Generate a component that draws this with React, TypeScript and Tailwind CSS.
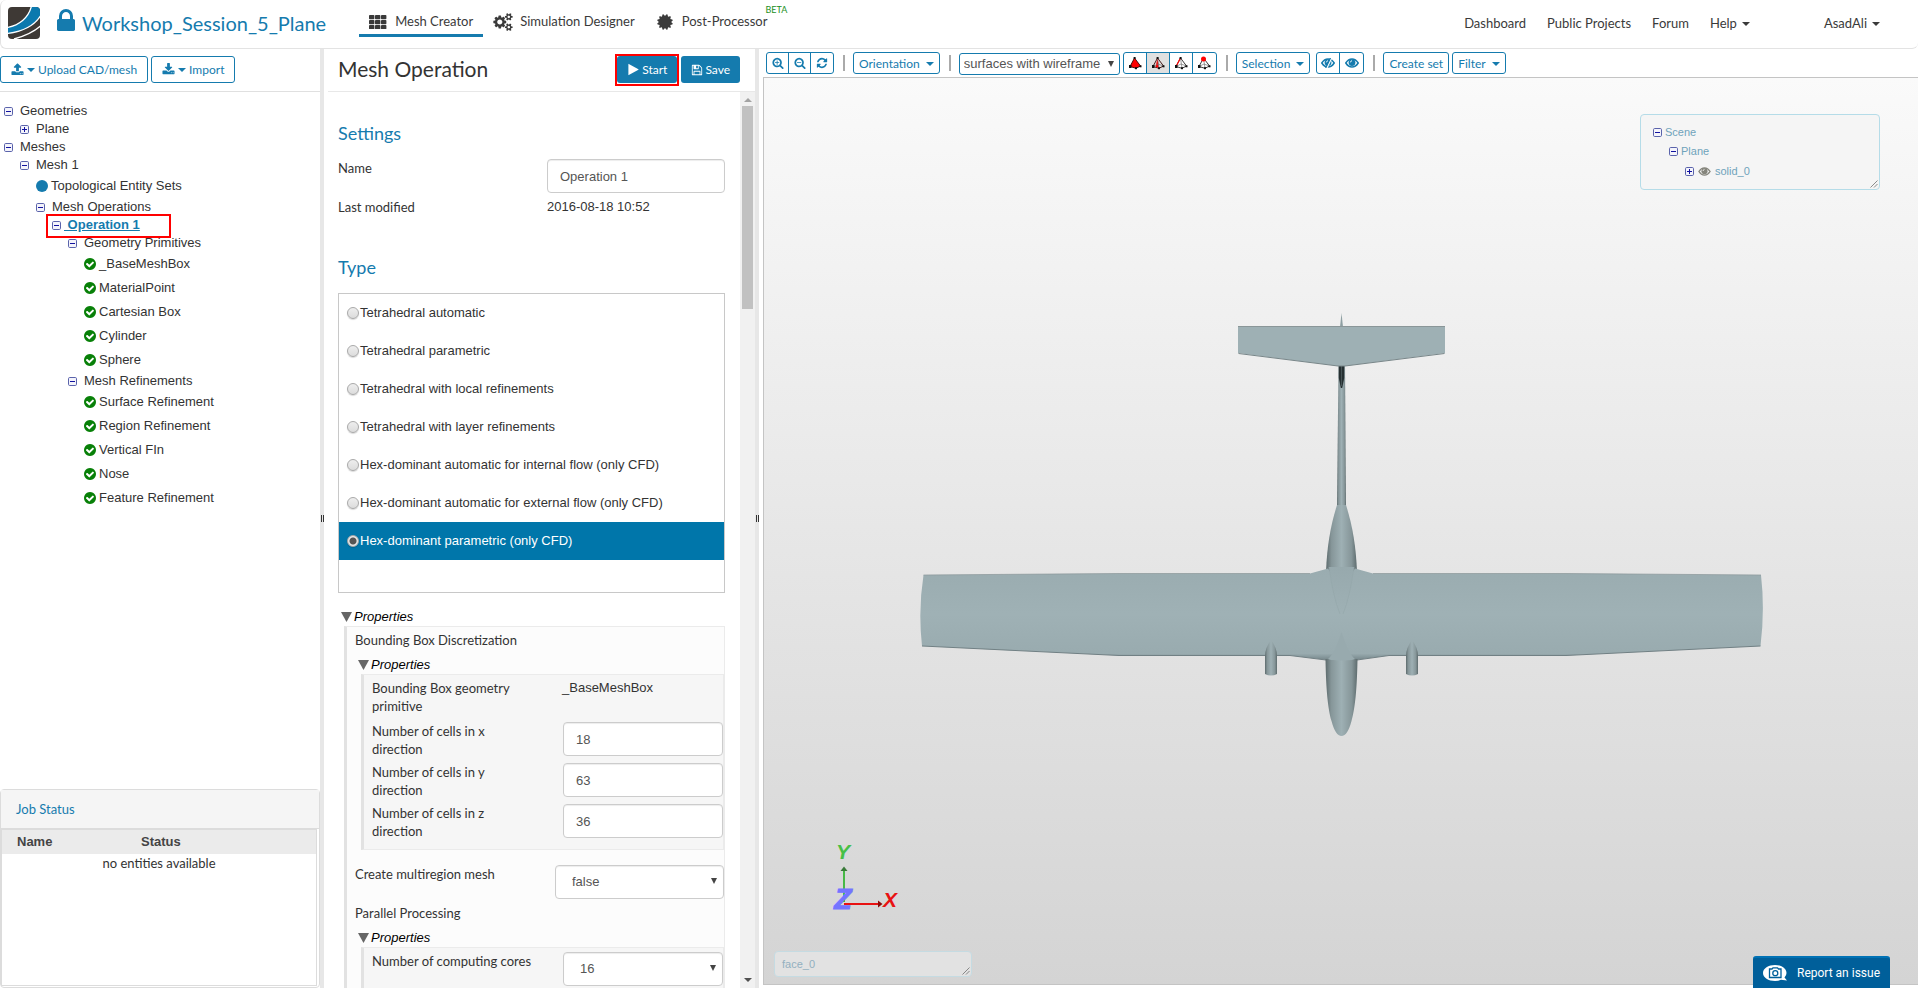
import { useState } from "react";
import type { ReactNode } from "react";

const icons = {
  lock: "M640 768h512v-192q0-106-75-181t-181-75-181 75-75 181v192zm832 96v576q0 40-28 68t-68 28h-960q-40 0-68-28t-28-68v-576q0-40 28-68t68-28h32v-192q0-184 132-316t316-132 316 132 132 316v192h32q40 0 68 28t28 68z",
  certificate:
    "M1504 896l138 135q30 28 20 70-12 41-52 51l-188 48 53 186q12 41-19 70-29 31-70 19l-186-53-48 188q-10 40-51 52-12 2-19 2-31 0-51-22l-135-138-135 138q-28 30-70 20-41-11-51-52l-48-188-186 53q-41 12-70-19-31-29-19-70l53-186-188-48q-40-10-52-51-10-42 20-70l138-135-138-135q-30-28-20-70 12-41 52-51l188-48-53-186q-12-41 19-70 29-31 70-19l186 53 48-188q10-41 51-51 41-12 70 19l135 139 135-139q29-30 70-19 41 10 51 51l48 188 186-53q41-12 70 19 31 29 19 70l-53 186 188 48q40 10 52 51 10 42-20 70z",
  cogs: "M832 896q0-106-75-181t-181-75-181 75-75 181 75 181 181 75 181-75 75-181zm768 512q0-52-38-90t-90-38-90 38-38 90q0 53 37.5 90.5t90.5 37.5 90.5-37.5 37.5-90.5zm0-1024q0-52-38-90t-90-38-90 38-38 90q0 53 37.5 90.5t90.5 37.5 90.5-37.5 37.5-90.5zm-384 421v185q0 10-7 19.5t-16 10.5l-155 24q-11 35-32 76 34 48 90 115 7 11 7 20 0 12-7 19-23 30-82.5 89.5t-78.5 59.5q-11 0-21-7l-115-90q-37 19-77 31-11 108-23 155-7 24-30 24h-186q-11 0-20-7.5t-10-17.5l-23-153q-34-10-75-31l-118 89q-7 7-20 7-11 0-21-8-144-133-144-160 0-9 7-19 10-14 41-53t47-61q-23-44-35-82l-152-24q-10-1-17-9.5t-7-19.5v-185q0-10 7-19.5t16-10.5l155-24q11-35 32-76-34-48-90-115-7-11-7-20 0-12 7-20 22-30 82-89t79-59q11 0 21 7l115 90q34-18 77-32 11-108 23-154 7-24 30-24h186q11 0 20 7.5t10 17.5l23 153q34 10 75 31l118-89q8-7 20-7 11 0 21 8 144 133 144 160 0 8-7 19-12 16-42 54t-45 60q23 48 34 82l152 23q10 2 17 10.5t7 19.5zm640 533v140q0 16-149 31-12 27-30 52 51 113 51 138 0 4-4 7-122 71-124 71-8 0-46-47t-52-68q-20 2-30 2t-30-2q-14 21-52 68t-46 47q-2 0-124-71-4-3-4-7 0-25 51-138-18-25-30-52-149-15-149-31v-140q0-16 149-31 13-29 30-52-51-113-51-138 0-4 4-7 4-2 35-20t59-34 30-16q8 0 46 46.5t52 67.5q20-2 30-2t30 2q51-71 92-112l6-2q4 0 124 70 4 3 4 7 0 25-51 138 17 23 30 52 149 15 149 31zm0-1024v140q0 16-149 31-12 27-30 52 51 113 51 138 0 4-4 7-122 71-124 71-8 0-46-47t-52-68q-20 2-30 2t-30-2q-14 21-52 68t-46 47q-2 0-124-71-4-3-4-7 0-25 51-138-18-25-30-52-149-15-149-31v-140q0-16 149-31 13-29 30-52-51-113-51-138 0-4 4-7 4-2 35-20t59-34 30-16q8 0 46 46.5t52 67.5q20-2 30-2t30 2q51-71 92-112l6-2q4 0 124 70 4 3 4 7 0 25-51 138 17 23 30 52 149 15 149 31z",
  check:
    "M1412 734q0-28-18-46l-91-90q-19-19-45-19t-45 19l-408 407-226-226q-19-19-45-19t-45 19l-91 90q-18 18-18 46 0 27 18 45l362 362q19 19 45 19 27 0 46-19l543-543q18-18 18-45zm252 162q0 209-103 385.5t-279.5 279.5-385.5 103-385.5-103-279.5-279.5-103-385.5 103-385.5 279.5-279.5 385.5-103 385.5 103 279.5 279.5 103 385.5z",
  play: "M1576 927l-1328 738q-23 13-39.5 3t-16.5-36v-1472q0-26 16.5-36t39.5 3l1328 738q23 13 23 31t-23 31z",
  save: "M512 1536h768v-384h-768v384zm896 0h128v-896q0-14-10-38.5t-20-34.5l-281-281q-10-10-34-20t-39-10v416q0 40-28 68t-68 28h-576q-40 0-68-28t-28-68v-416h-128v1280h128v-416q0-40 28-68t68-28h832q40 0 68 28t28 68v416zm-384-928v-320q0-13-9.5-22.5t-22.5-9.5h-192q-13 0-22.5 9.5t-9.5 22.5v320q0 13 9.5 22.5t22.5 9.5h192q13 0 22.5-9.5t9.5-22.5zm640 32v928q0 40-28 68t-68 28h-1344q-40 0-68-28t-28-68v-1344q0-40 28-68t68-28h928q40 0 88 20t76 48l280 280q28 28 48 76t20 88z",
  zoomIn:
    "M1088 800v64q0 13-9.5 22.5t-22.5 9.5h-224v224q0 13-9.5 22.5t-22.5 9.5h-64q-13 0-22.5-9.5t-9.5-22.5v-224h-224q-13 0-22.5-9.5t-9.5-22.5v-64q0-13 9.5-22.5t22.5-9.5h224v-224q0-13 9.5-22.5t22.5-9.5h64q13 0 22.5 9.5t9.5 22.5v224h224q13 0 22.5 9.5t9.5 22.5zm128 32q0-185-131.5-316.5t-316.5-131.5-316.5 131.5-131.5 316.5 131.5 316.5 316.5 131.5 316.5-131.5 131.5-316.5zm512 832q0 53-37.5 90.5t-90.5 37.5q-54 0-90-38l-343-342q-179 124-399 124-143 0-273.5-55.5t-225-150-150-225-55.5-273.5 55.5-273.5 150-225 225-150 273.5-55.5 273.5 55.5 225 150 150 225 55.5 273.5q0 220-124 399l343 343q37 37 37 90z",
  zoomOut:
    "M1088 800v64q0 13-9.5 22.5t-22.5 9.5h-576q-13 0-22.5-9.5t-9.5-22.5v-64q0-13 9.5-22.5t22.5-9.5h576q13 0 22.5 9.5t9.5 22.5zm128 32q0-185-131.5-316.5t-316.5-131.5-316.5 131.5-131.5 316.5 131.5 316.5 316.5 131.5 316.5-131.5 131.5-316.5zm512 832q0 53-37.5 90.5t-90.5 37.5q-54 0-90-38l-343-342q-179 124-399 124-143 0-273.5-55.5t-225-150-150-225-55.5-273.5 55.5-273.5 150-225 225-150 273.5-55.5 273.5 55.5 225 150 150 225 55.5 273.5q0 220-124 399l343 343q37 37 37 90z",
  refresh:
    "M1639 1056q0 5-1 7-64 268-268 434.5t-478 166.5q-146 0-282.5-55t-243.5-157l-129 129q-19 19-45 19t-45-19-19-45v-448q0-26 19-45t45-19h448q26 0 45 19t19 45-19 45l-137 137q71 66 161 102t187 36q134 0 250-65t186-179q11-17 53-117 8-23 30-23h192q13 0 22.5 9.5t9.5 22.5zm25-800v448q0 26-19 45t-45 19h-448q-26 0-45-19t-19-45 19-45l138-138q-148-137-349-137-134 0-250 65t-186 179q-11 17-53 117-8 23-30 23h-199q-13 0-22.5-9.5t-9.5-22.5v-7q65-268 270-434.5t480-166.5q146 0 284 55.5t245 156.5l130-129q19-19 45-19t45 19 19 45z",
  upload:
    "M1344 1472q0-26-19-45t-45-19-45 19-19 45 19 45 45 19 45-19 19-45zm256 0q0-26-19-45t-45-19-45 19-19 45 19 45 45 19 45-19 19-45zm128-224v320q0 40-28 68t-68 28h-1472q-40 0-68-28t-28-68v-320q0-40 28-68t68-28h427q21 56 70.5 92t110.5 36h256q61 0 110.5-36t70.5-92h427q40 0 68 28t28 68zm-325-648q-17 40-59 40h-256v448q0 26-19 45t-45 19h-256q-26 0-45-19t-19-45v-448h-256q-42 0-59-40-17-39 14-69l448-448q18-19 45-19t45 19l448 448q31 30 14 69z",
  download:
    "M1344 1344q0-26-19-45t-45-19-45 19-19 45 19 45 45 19 45-19 19-45zm256 0q0-26-19-45t-45-19-45 19-19 45 19 45 45 19 45-19 19-45zm128-224v320q0 40-28 68t-68 28h-1472q-40 0-68-28t-28-68v-320q0-40 28-68t68-28h465l135 136q58 56 136 56t136-56l136-136h464q40 0 68 28t28 68zm-325-569q17 41-14 70l-448 448q-18 19-45 19t-45-19l-448-448q-31-29-14-70 17-39 59-39h256v-448q0-26 19-45t45-19h256q26 0 45 19t19 45v448h256q42 0 59 39z",
};

function Icon({ name, className }: { name: keyof typeof icons; className: string }) {
  return (
    <svg viewBox="0 0 1792 1792" fill="currentColor" className={`shrink-0 overflow-visible ${className}`} aria-hidden="true">
      <path d={icons[name]} />
    </svg>
  );
}

function GridIcon() {
  return (
    <svg viewBox="0 0 18 14" className="h-[14px] w-[18px]" fill="currentColor" aria-hidden="true">
      {[0, 5, 10].map((y) =>
        [0, 6, 12].map((x) => <rect key={`${x}-${y}`} x={x} y={y} width="5.4" height="4.2" rx="0.8" />),
      )}
    </svg>
  );
}

function Caret() {
  return (
    <svg viewBox="0 0 8 4" className="h-1 w-2 shrink-0" fill="currentColor" aria-hidden="true">
      <path d="M0 0h8L4 4z" />
    </svg>
  );
}

function Logo() {
  return (
    <svg viewBox="0 0 32 32" className="h-8 w-8 shrink-0" aria-hidden="true">
      <clipPath id="logo-clip">
        <rect width="32" height="32" rx="4" />
      </clipPath>
      <g clipPath="url(#logo-clip)">
        <rect width="32" height="32" fill="#3e3935" />
        <path d="M-1 20.500C11 18.500 20.500 11 23 -1H33V8C27 18 15 25.500 -1 27z" fill="#0b79ae" />
        <path d="M-1 20.500C11 18.500 20.500 11 23.500 -1" fill="none" stroke="#fff" strokeWidth="1.300" />
        <path d="M-1 26.500C15 24.500 27 18 33 8" fill="none" stroke="#fff" strokeWidth="1.300" />
        <path d="M6 32C15 29.500 25 26 33 18.500" fill="none" stroke="#fff" strokeWidth="1.300" />
      </g>
    </svg>
  );
}

function EyeIcon({ slashed = false, className = "h-[10px] w-[14px]" }: { slashed?: boolean; className?: string }) {
  return (
    <svg viewBox="0 0 14 10" className={`shrink-0 ${className}`} aria-hidden="true">
      <path d="M.8 5C2.500 2.300 4.600 1 7 1s4.500 1.300 6.200 4C11.500 7.700 9.400 9 7 9S2.500 7.700.8 5z" fill="none" stroke="currentColor" strokeWidth="1.500" />
      <circle cx="7" cy="4.600" r="3.400" fill="currentColor" />
      <path d="M5.400 4.400q.1-1.500 1.600-1.700" fill="none" stroke="#fff" strokeWidth=".9" />
      {slashed && (
        <>
          <path d="M10.800 -.5L5.500 10.500" stroke="#fff" strokeWidth="1.600" />
          <path d="M9.500 0L4.700 10" stroke="currentColor" strokeWidth="1.200" />
        </>
      )}
    </svg>
  );
}

function PickIcon({ kind }: { kind: "volume" | "face" | "edge" | "vertex" }) {
  const line = kind === "edge" || kind === "vertex" ? "#222" : "#300";
  return (
    <svg viewBox="0 0 14 14" className="h-[14px] w-[14px]" aria-hidden="true">
      <path d="M6.500 2L2 10.500 8 12.300 12.500 10z" fill={kind === "volume" ? "#f00" : "none"} stroke={line} strokeWidth=".9" />
      {kind === "face" && <path d="M6.500 2L4.500 11 8 12z" fill="#f00" />}
      <path d="M6.500 2L8 12.300M2 10.500L7 8l5.500 2" fill="none" stroke={kind === "volume" ? "#f00" : "#777"} strokeWidth=".7" />
      {kind === "edge" && <path d="M6.500 2L2 10.500" stroke="#f00" strokeWidth="1.200" />}
      <rect x="1" y="9" width="2.500" height="3" fill="#111" />
      <rect x="7" y="11.200" width="2" height="2" fill="#111" />
      <rect x="11.500" y="9.300" width="2" height="2" fill="#111" />
      {kind === "vertex" ? <circle cx="6.500" cy="3" r="2.500" fill="#f00" /> : <rect x="5.600" y="1" width="2" height="2" fill="#111" />}
    </svg>
  );
}

function Toggle({ open }: { open: boolean }) {
  return (
    <svg viewBox="0 0 9 9" className="h-[9px] w-[9px] shrink-0" aria-hidden="true">
      <rect x=".5" y=".5" width="8" height="8" rx="1.200" fill="#f4f4fb" stroke="#5a63ab" />
      <path d={open ? "M2 4.500h5" : "M2 4.500h5M4.500 2v5"} stroke="#1212a0" strokeWidth="1" />
    </svg>
  );
}

function Grip() {
  return (
    <svg viewBox="0 0 8 8" className="absolute right-px bottom-px h-2 w-2" stroke="#707070" strokeWidth=".8" aria-hidden="true">
      <path d="M.5 7.500l7-7M4 7.500L7.500 4" />
    </svg>
  );
}

function Splitter() {
  return (
    <div className="flex w-1 shrink-0 items-center justify-center gap-px bg-[#e7e7e7]">
      <span className="h-[7px] w-px bg-[#333]" />
      <span className="h-[7px] w-px bg-[#333]" />
    </div>
  );
}

const navTabs = [
  { label: "Mesh Creator", icon: <GridIcon />, tone: "border-[#157bae]" },
  { label: "Simulation Designer", icon: <Icon name="cogs" className="h-[18px] w-[18px]" />, tone: "border-transparent" },
  { label: "Post-Processor", icon: <Icon name="certificate" className="h-[18px] w-[18px]" />, tone: "border-transparent", beta: true },
];

function Header() {
  return (
    <header className="flex h-[49px] shrink-0 items-start rounded-md border-b border-l border-[#e3e3e3] pt-[7px] pl-[7px] text-[#3a3a3a]">
      <Logo />
      <Icon name="lock" className="ml-3 h-7 w-7 text-[#157bae]" />
      <h1 className="ml-[2px] text-[20px] leading-8 text-[#157bae]">Workshop_Session_5_Plane</h1>
      <nav className="ml-[33px] flex gap-px">
        {navTabs.map((tab) => (
          <a key={tab.label} href="#" className={`relative flex h-[30px] items-center gap-2 border-b-[3px] px-[10px] pt-[3px] text-[13px] ${tab.tone}`}>
            {tab.icon}
            {tab.label}
            {tab.beta && <span className="absolute -top-[3px] left-full -ml-[12px] text-[9px] leading-3 text-[#1c8f1c]">BETA</span>}
          </a>
        ))}
      </nav>
      <nav className="mr-[38px] ml-auto flex h-8 items-center gap-[21px] pt-px text-[13px]">
        <a href="#">Dashboard</a>
        <a href="#">Public Projects</a>
        <a href="#">Forum</a>
        <button className="flex items-center gap-[5px]">
          Help <Caret />
        </button>
        <button className="ml-[53px] flex items-center gap-[5px]">
          AsadAli <Caret />
        </button>
      </nav>
    </header>
  );
}

type TreeItem = { label: string; depth: number; kind: "open" | "closed" | "ok" | "dot" | "current" };

const tree: TreeItem[] = [
  { label: "Geometries", depth: 0, kind: "open" },
  { label: "Plane", depth: 1, kind: "closed" },
  { label: "Meshes", depth: 0, kind: "open" },
  { label: "Mesh 1", depth: 1, kind: "open" },
  { label: "Topological Entity Sets", depth: 2, kind: "dot" },
  { label: "Mesh Operations", depth: 2, kind: "open" },
  { label: "Operation 1", depth: 3, kind: "current" },
  { label: "Geometry Primitives", depth: 4, kind: "open" },
  { label: "_BaseMeshBox", depth: 5, kind: "ok" },
  { label: "MaterialPoint", depth: 5, kind: "ok" },
  { label: "Cartesian Box", depth: 5, kind: "ok" },
  { label: "Cylinder", depth: 5, kind: "ok" },
  { label: "Sphere", depth: 5, kind: "ok" },
  { label: "Mesh Refinements", depth: 4, kind: "open" },
  { label: "Surface Refinement", depth: 5, kind: "ok" },
  { label: "Region Refinement", depth: 5, kind: "ok" },
  { label: "Vertical FIn", depth: 5, kind: "ok" },
  { label: "Nose", depth: 5, kind: "ok" },
  { label: "Feature Refinement", depth: 5, kind: "ok" },
];

const indent = ["pl-1", "pl-5", "pl-9", "pl-[52px]", "pl-[68px]", "pl-[83px]"];

function TreeRow({ item }: { item: TreeItem }) {
  if (item.kind === "ok" || item.kind === "dot") {
    return (
      <li className={`flex h-6 items-center ${item.kind === "ok" ? "gap-[2px]" : "gap-[3px]"} ${indent[item.depth]}`}>
        {item.kind === "ok" ? (
          <Icon name="check" className="h-[14px] w-[14px] text-[#088008]" />
        ) : (
          <span className="h-3 w-3 rounded-full bg-[#157bae]" />
        )}
        {item.label}
      </li>
    );
  }
  if (item.kind === "current") {
    return (
      <li className={`relative flex h-[18px] items-center gap-[3px] ${indent[item.depth]}`}>
        <Toggle open />
        <a href="#" className="font-bold whitespace-pre text-[#157bae] underline">
          {` ${item.label}`}
        </a>
        <span className="absolute -top-[2px] left-[46px] h-6 w-[125px] border-2 border-[#f00]" />
      </li>
    );
  }
  return (
    <li className={`flex h-[18px] items-center gap-[7px] ${indent[item.depth]}`}>
      <Toggle open={item.kind === "open"} />
      {item.label}
    </li>
  );
}

function ImportButton({ icon, label }: { icon: "upload" | "download"; label: string }) {
  return (
    <button className="flex h-[27px] items-center gap-[3px] rounded-[3px] border border-[#157bae] px-[10px] text-[12px] text-[#157bae]">
      <Icon name={icon} className="h-[13px] w-[13px]" />
      <Caret />
      {label}
    </button>
  );
}

function LeftPanel() {
  return (
    <aside className="flex w-80 shrink-0 flex-col">
      <div className="flex h-[43px] shrink-0 items-center gap-[3px] border-b border-[#e0e0e0] pb-px">
        <ImportButton icon="upload" label="Upload CAD/mesh" />
        <ImportButton icon="download" label="Import" />
      </div>
      <ul className="pt-[10px] font-['Liberation_Sans',Arial,sans-serif] text-[13px]">
        {tree.map((item) => (
          <TreeRow key={item.label} item={item} />
        ))}
      </ul>
      <section className="mt-auto flex h-[199px] flex-col rounded border border-[#dcdcdc]">
        <h2 className="flex h-[39px] shrink-0 items-center border-b border-[#dcdcdc] bg-[#f5f5f5] px-[15px] pt-px text-[13px] text-[#157bae]">
          Job Status
        </h2>
        <div className="mr-[2px] mb-px flex-1 border border-[#dcdcdc]">
          <table className="w-full">
            <thead>
              <tr className="h-6 bg-[#ebebeb] font-['Liberation_Sans',Arial,sans-serif] text-[13px] text-[#444]">
                <th className="w-[124px] px-[15px] text-left font-bold">Name</th>
                <th className="px-[15px] text-left font-bold">Status</th>
              </tr>
            </thead>
            <tbody>
              <tr>
                <td colSpan={2} className="text-center text-[13px] leading-[18px]">
                  no entities available
                </td>
              </tr>
            </tbody>
          </table>
        </div>
      </section>
    </aside>
  );
}

const meshTypes = [
  "Tetrahedral automatic",
  "Tetrahedral parametric",
  "Tetrahedral with local refinements",
  "Tetrahedral with layer refinements",
  "Hex-dominant automatic for internal flow (only CFD)",
  "Hex-dominant automatic for external flow (only CFD)",
  "Hex-dominant parametric (only CFD)",
];

const radioClass =
  "h-3 w-3 shrink-0 appearance-none rounded-full border border-[#a9a9a9] bg-linear-to-b from-[#eee] to-[#dcdcdc] shadow-[0_1px_1px_rgba(0,0,0,0.15)] checked:bg-[radial-gradient(circle,#555_0_3px,#e8e8e8_4px)]";
const fieldClass =
  "h-[34px] w-full rounded border border-[#ccc] bg-white font-['Liberation_Sans',Arial,sans-serif] text-[13px] text-[#555] shadow-[inset_0_1px_1px_rgba(0,0,0,0.075)]";

function Select({ id, options }: { id: string; options: string[] }) {
  return (
    <div className="relative">
      <select id={id} className={`${fieldClass} appearance-none pl-4`}>
        {options.map((o) => (
          <option key={o}>{o}</option>
        ))}
      </select>
      <svg viewBox="0 0 6 6" className="pointer-events-none absolute top-[13px] right-[7px] h-[6px] w-[6px]" fill="#444" aria-hidden="true">
        <path d="M0 0h6L3 6z" />
      </svg>
    </div>
  );
}

function Properties({ children, nested = false }: { children: ReactNode; nested?: boolean }) {
  return (
    <div>
      <div className="flex h-[18px] items-center gap-[2px] pl-[3px] font-['Liberation_Sans',Arial,sans-serif] text-[13px] text-black italic">
        <svg viewBox="0 0 11 10" className="h-[10px] w-[11px]" fill="#666" aria-hidden="true">
          <path d="M0 0h11L5.500 10z" />
        </svg>
        Properties
      </div>
      <div className={`ml-[6px] border border-l-[3px] border-[#ebebeb] border-l-[#e2e2e2] pt-1 pl-2 ${nested ? "bg-[#f6f6f6]" : "bg-[#fcfcfc]"}`}>
        {children}
      </div>
    </div>
  );
}

const cells = [
  { axis: "x", value: "18" },
  { axis: "y", value: "63" },
  { axis: "z", value: "36" },
];

function MiddlePanel() {
  const [type, setType] = useState(meshTypes[6]);
  return (
    <main className="flex w-[431px] shrink-0 flex-col">
      <div className="ml-1 flex h-[43px] shrink-0 items-center border-b border-[#e8e8e8] pr-[15px] pb-px pl-[10px]">
        <h2 className="mr-auto pb-[2px] text-[21px] leading-7">Mesh Operation</h2>
        <div className="relative mr-1">
          <button className="flex h-[27px] items-center gap-[2px] rounded-[3px] bg-[#157bae] px-[10px] text-[12px] text-white">
            <Icon name="play" className="h-[13px] w-[13px]" />
            Start
          </button>
          <span className="pointer-events-none absolute -inset-[2px] -bottom-[3px] border-2 border-[#f00]" />
        </div>
        <button className="flex h-[27px] items-center gap-[2px] rounded-[3px] bg-[#157bae] px-[10px] text-[12px] text-white">
          <Icon name="save" className="h-3 w-3" />
          Save
        </button>
      </div>
      <div className="flex min-h-0 flex-1">
        <div className="flex-1 overflow-hidden pr-[15px] pl-[14px] text-[13px] leading-[18px]">
          <h3 className="mt-[29px] text-[18px] leading-6 text-[#157bae]">Settings</h3>
          <div className="mt-[14px] grid grid-cols-[209px_1fr]">
            <label htmlFor="op-name">Name</label>
            <input id="op-name" defaultValue="Operation 1" className={`${fieldClass} px-3`} />
          </div>
          <div className="mt-[5px] grid grid-cols-[209px_1fr]">
            <span>Last modified</span>
            <span className="font-['Liberation_Sans',Arial,sans-serif]">2016-08-18 10:52</span>
          </div>
          <h3 className="mt-[39px] text-[18px] leading-6 text-[#157bae]">Type</h3>
          <div className="mt-[14px] border border-[#c8c8c8] pb-8 font-['Liberation_Sans',Arial,sans-serif]">
            {meshTypes.map((name) => (
              <label key={name} className={`flex h-[38px] items-center gap-px pb-px pl-2 ${type === name ? "bg-[#0076aa] text-white" : ""}`}>
                <input type="radio" name="mesh-type" className={radioClass} checked={type === name} onChange={() => setType(name)} />
                {name}
              </label>
            ))}
          </div>
          <div className="mt-[15px]">
            <Properties>
              <p className="mb-[7px]">Bounding Box Discretization</p>
              <Properties nested>
                <div className="mb-[7px] grid grid-cols-[190px_1fr]">
                  <span className="pr-8">Bounding Box geometry primitive</span>
                  <span className="font-['Liberation_Sans',Arial,sans-serif]">_BaseMeshBox</span>
                </div>
                <div className="space-y-[5px] pb-[9px]">
                  {cells.map((cell) => (
                    <div key={cell.axis} className="grid grid-cols-[191px_1fr]">
                      <label htmlFor={`cells-${cell.axis}`} className="pr-[70px]">
                        Number of cells in {cell.axis} direction
                      </label>
                      <input id={`cells-${cell.axis}`} defaultValue={cell.value} className={`${fieldClass} px-3`} />
                    </div>
                  ))}
                </div>
              </Properties>
              <div className="mt-[15px] mb-[5px] grid grid-cols-[200px_1fr]">
                <label htmlFor="multiregion">Create multiregion mesh</label>
                <Select id="multiregion" options={["false", "true"]} />
              </div>
              <p className="mb-[7px]">Parallel Processing</p>
              <Properties nested>
                <div className="grid grid-cols-[191px_1fr] pb-2">
                  <label htmlFor="cores">Number of computing cores</label>
                  <Select id="cores" options={["16", "8", "4"]} />
                </div>
              </Properties>
            </Properties>
          </div>
        </div>
        <div className="flex w-[15px] shrink-0 flex-col items-center bg-[#f1f1f1] py-[6px]" aria-hidden="true">
          <svg viewBox="0 0 8 4" className="h-1 w-2" fill="#a3a3a3">
            <path d="M0 4h8L4 0z" />
          </svg>
          <div className="mt-1 h-[203px] w-[11px] bg-[#c1c1c1]" />
          <div className="mt-auto text-[#505050]">
            <Caret />
          </div>
        </div>
      </div>
    </main>
  );
}

const toolButton = "flex h-[22px] items-center rounded-[3px] border border-[#157bae] text-[12px] text-[#157bae]";

function Separator() {
  return <span className="mr-2 ml-[9px] h-4 w-[2px] bg-[#aaa]" />;
}

function IconGroup({ items }: { items: { label: string; icon: ReactNode; active?: boolean }[] }) {
  return (
    <div className={`${toolButton} divide-x divide-[#157bae] overflow-hidden bg-white`}>
      {items.map((item) => (
        <button key={item.label} aria-label={item.label} className={`flex h-full w-[23px] items-center justify-center ${item.active ? "bg-[#e0e0e0]" : ""}`}>
          {item.icon}
        </button>
      ))}
    </div>
  );
}

function ViewToolbar() {
  return (
    <div className="flex h-[28px] shrink-0 items-center pl-[7px]">
      <div className={`${toolButton} divide-x divide-[#157bae]`}>
        <button aria-label="Zoom in" className="flex h-full w-[22px] items-center justify-center">
          <Icon name="zoomIn" className="h-3 w-3" />
        </button>
        <button aria-label="Zoom out" className="flex h-full w-[22px] items-center justify-center">
          <Icon name="zoomOut" className="h-3 w-3" />
        </button>
        <button aria-label="Reset view" className="flex h-full w-[22px] items-center justify-center">
          <Icon name="refresh" className="h-3 w-3" />
        </button>
      </div>
      <Separator />
      <button className={`${toolButton} gap-[6px] px-[5px] pt-px`}>
        Orientation <Caret />
      </button>
      <Separator />
      <div className="relative mt-px">
        <select
          aria-label="Render mode"
          className="block h-[22px] w-[161px] appearance-none rounded-[3px] border border-[#157bae] bg-white pl-1 font-['Liberation_Sans',Arial,sans-serif] text-[13px] text-[#555]"
        >
          <option>surfaces with wireframe</option>
          <option>surfaces</option>
          <option>wireframe</option>
        </select>
        <svg viewBox="0 0 6 6" className="pointer-events-none absolute top-2 right-[6px] h-[6px] w-[6px]" fill="#444" aria-hidden="true">
          <path d="M0 0h6L3 6z" />
        </svg>
      </div>
      <div className="ml-[3px]">
        <IconGroup
          items={[
            { label: "Pick volumes", icon: <PickIcon kind="volume" /> },
            { label: "Pick faces", icon: <PickIcon kind="face" />, active: true },
            { label: "Pick edges", icon: <PickIcon kind="edge" /> },
            { label: "Pick vertices", icon: <PickIcon kind="vertex" /> },
          ]}
        />
      </div>
      <Separator />
      <button className={`${toolButton} mr-[6px] gap-[6px] px-[5px] pt-px`}>
        Selection <Caret />
      </button>
      <IconGroup
        items={[
          { label: "Hide selection", icon: <EyeIcon slashed /> },
          { label: "Show all", icon: <EyeIcon /> },
        ]}
      />
      <Separator />
      <button className={`${toolButton} mr-[3px] px-[5px] pt-px`}>Create set</button>
      <button className={`${toolButton} gap-[6px] px-[5px] pt-px`}>
        Filter <Caret />
      </button>
    </div>
  );
}

function Aircraft() {
  return (
    <svg viewBox="764 78 1154 906" className="h-full w-full" role="img" aria-label="Plane">
      <defs>
        <linearGradient id="body" x1="0" x2="1" y1="0" y2="0">
          <stop offset="0" stopColor="#5d6b6d" />
          <stop offset="0.18" stopColor="#869699" />
          <stop offset="0.5" stopColor="#9eb0b4" />
          <stop offset="0.82" stopColor="#869699" />
          <stop offset="1" stopColor="#5d6b6d" />
        </linearGradient>
        <linearGradient id="wing" x1="0" x2="0" y1="0" y2="1">
          <stop offset="0" stopColor="#9aacb0" />
          <stop offset="0.5" stopColor="#9fb1b5" />
          <stop offset="0.93" stopColor="#99abaf" />
          <stop offset="1" stopColor="#75868a" />
        </linearGradient>
        <linearGradient id="spine" x1="0" x2="0" y1="0" y2="1">
          <stop offset="0" stopColor="#97a9ad" />
          <stop offset="1" stopColor="#9fb1b5" />
        </linearGradient>
      </defs>
      <path d="M1340 327L1341.500 313 1343 327z" fill="#8fa0a3" />
      <path d="M1338.500 364H1345L1346 506H1337z" fill="url(#body)" />
      <path d="M1338.800 365h5.400v13l-2 10h-1.400l-2-10z" fill="#263032" />
      <path d="M1341.500 366v20" stroke="#5d6b6d" strokeWidth=".6" />
      <path d="M1238 326H1445V353L1345 366H1338L1238 353z" fill="#9eb0b4" />
      <path d="M1238.500 353.500L1338 366H1345L1444.500 353.500" fill="none" stroke="#788689" />
      <path d="M1238 326.500H1445" stroke="#8a9698" />
      <path d="M1337 505H1346C1352 524 1356 545 1357 572V590H1326V572C1327 545 1331 524 1337 505z" fill="url(#body)" />
      <path
        d="M923.500 575L1119 573.500H1310L1328 568.500 1331 573H1352L1355 568.500 1373 573.500H1566L1761 575Q1765 610 1760.500 646L1566 655.500H1389L1356 660H1327L1290 655.500H1119L922 646Q918 610 923.500 575z"
        fill="url(#wing)"
      />
      <path d="M923.500 575L1119 573.500H1310M1373 573.500H1566L1761 575" fill="none" stroke="#8b9799" strokeWidth=".7" />
      <path d="M922 646L1119 655.500H1290L1326 660M1357 660L1389 655.500H1566L1760.500 646" fill="none" stroke="#718084" />
      <path d="M1329 567H1354C1350 594 1345 612 1341.500 616C1338 612 1333 594 1329 567z" fill="url(#spine)" />
      <path d="M1329 567Q1333 597 1340 614M1354 567Q1350 597 1343 614" fill="none" stroke="#94a6aa" strokeWidth=".6" />
      <path d="M1325.500 659C1326 690 1328 709 1331.500 721Q1335.500 736 1341.500 736T1351.500 721C1355 709 1357 690 1357.500 659z" fill="url(#body)" />
      <path d="M1341.500 632C1337 646 1333 655 1328 659C1332 661 1351 661 1355 659C1350 655 1346 646 1341.500 632z" fill="#98aaae" />
      {[1265, 1406].map((x) => (
        <path key={x} d={`M${x + 6} 640Q${x} 648 ${x} 656V674Q${x + 6} 677 ${x + 12} 674V656Q${x + 12} 648 ${x + 6} 640z`} fill="url(#body)" />
      ))}
    </svg>
  );
}

function Axes() {
  return (
    <svg
      viewBox="0 -15 80 105"
      className="absolute bottom-[52px] left-[68px] h-[105px] w-20"
      fontFamily="Liberation Sans, Arial, sans-serif"
      fontWeight="bold"
      fontStyle="italic"
      aria-label="Axes"
    >
      <path d="M12 60V29" stroke="#46b946" strokeWidth="2" />
      <path d="M8.500 29L12 24.500 15.500 29z" fill="#397a39" />
      <path d="M12 62H48" stroke="#e81212" strokeWidth="2" />
      <path d="M46 58.500L50.500 62 46 65.500z" fill="#8d0a0a" />
      <text x="4" y="17" fontSize="21" fill="#46c046">Y</text>
      <text x="51" y="65" fontSize="21" fill="#e81212">X</text>
      <text x="2" y="67" fontSize="29" fill="#7474ff" stroke="#7474ff" strokeWidth=".8">Z</text>
    </svg>
  );
}

function Viewer() {
  return (
    <section className="flex min-w-0 flex-1 flex-col">
      <ViewToolbar />
      <div className="relative mb-[3px] ml-1 min-h-0 flex-1 border-y border-l border-[#c4c4c4] bg-linear-to-b from-[#fafafa] to-[#d4d4d4] font-['Liberation_Sans',Arial,sans-serif] text-[11px]">
        <Aircraft />
        <div className="absolute top-9 right-[38px] h-[76px] w-60 rounded border border-[#b5dce8] bg-[#f5f5f5] pt-[7px] pl-3 text-[#6fa3bb]">
          <ul>
            <li className="flex h-5 items-center gap-[3px]">
              <Toggle open /> Scene
            </li>
            <li className="flex h-[18px] items-center gap-[3px] pl-4">
              <Toggle open /> Plane
            </li>
            <li className="flex h-[22px] items-center gap-1 pl-8">
              <Toggle open={false} />
              <EyeIcon className="h-[9px] w-[13px] text-[#85857c]" /> solid_0
            </li>
          </ul>
          <Grip />
        </div>
        <Axes />
        <div className="absolute bottom-[7px] left-[10px] flex h-[26px] w-[198px] items-center rounded border border-[#c5dbe2] bg-[#e2e2e2] pl-[7px] text-[#92b0c0]">
          face_0
          <Grip />
        </div>
      </div>
    </section>
  );
}

function ReportButton() {
  return (
    <button className="fixed right-7 bottom-0 flex h-8 items-center gap-[10px] rounded-t-[3px] border-t-2 border-[#0072b5] bg-[#005f9a] px-[10px] font-[Roboto,sans-serif] text-[12px] text-white">
      <svg viewBox="0 0 24 16" className="h-4 w-6" aria-hidden="true">
        <path d="M12 0C18.500 0 23.500 3.500 23.500 8Q23.500 10.500 21.500 12.500L24 15.500 18 14.800Q15.500 16 12 16C5.500 16 0 12.500 0 8S5.500 0 12 0z" fill="#fff" />
        <path d="M6.500 4H9l1-1.200h4.500L15.500 4H18v8.500H6.500z" fill="none" stroke="#005f9a" strokeWidth="1.300" />
        <circle cx="12.300" cy="8.200" r="2.500" fill="none" stroke="#005f9a" strokeWidth="1.300" />
      </svg>
      Report an issue
    </button>
  );
}

export default function App() {
  return (
    <div className="flex h-screen flex-col overflow-hidden bg-white font-[Lato,sans-serif] text-[#333]">
      <Header />
      <div className="flex min-h-0 flex-1">
        <LeftPanel />
        <Splitter />
        <MiddlePanel />
        <Splitter />
        <Viewer />
      </div>
      <ReportButton />
    </div>
  );
}
